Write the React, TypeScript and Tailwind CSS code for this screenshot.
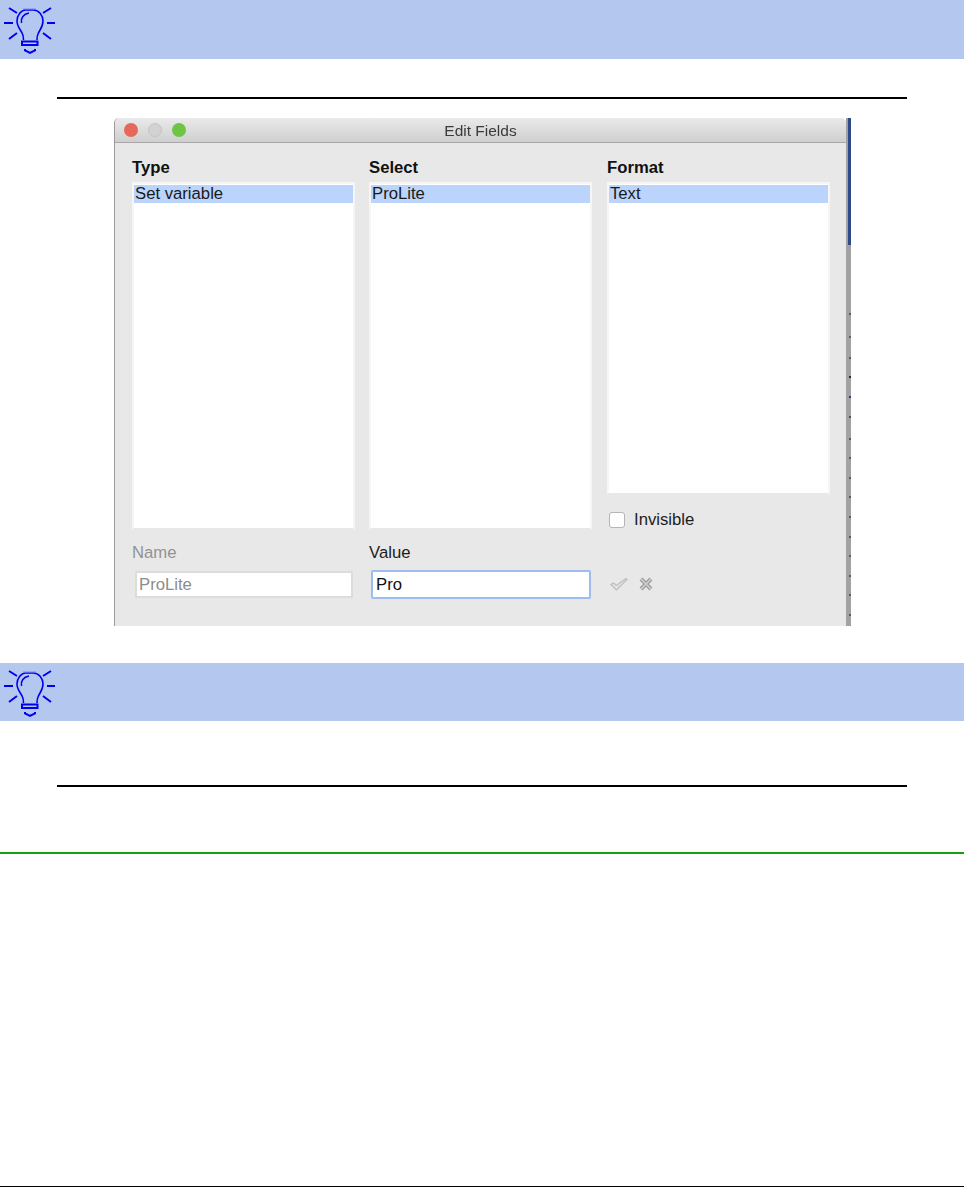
import React from "react";

function Bulb() {
  return (
    <svg width="58" height="58" viewBox="0 0 58 58" fill="none" stroke="#0000f0" strokeWidth="1.6" className="block">
      <path d="M4 23h9M47 23h8M9 8l8 5M51 8l-8 5M9 39l8-6M51 39l-8-6" strokeWidth="2" />
      <path d="M23.500 40c0-2 0-4-1-6-1.500-4-5.500-7-5.500-13 0-6 4.500-11 8.500-11h8c5 0 9.500 5 9.500 11 0 6-3.500 9-5 13-1 2-1 4-1 6" />
      <path d="M21.500 23c-1-5 2-9 7.500-10" />
      <path d="M23 9h13" stroke="#7b86f2" strokeWidth="1" />
      <rect x="22" y="41.500" width="15.500" height="3.500" strokeWidth="2" />
      <path d="M25 49v1.500l5 2.500 5-2.500V49" strokeWidth="2" />
    </svg>
  );
}

function TipBand({ height }: { height: string }) {
  return (
    <div className={`${height} bg-[#b4c7ef]`}>
      <Bulb />
    </div>
  );
}

function Rule() {
  return <div className="mx-[57px] h-[2px] bg-black" />;
}

function ListBox({ item, height }: { item: string; height: string }) {
  return (
    <div className={`${height} border-x-2 border-t-2 border-b-2 border-x-[#f6f6f6] border-t-[#f6f6f6] border-b-[#e8e8e8] bg-white pt-[1px]`}>
      <div className="h-[18px] bg-[#bbd4fb] pl-[1px] text-[16.7px] leading-[18px] text-[#1a1a1a]">{item}</div>
    </div>
  );
}

function Label({ children, bold, muted }: { children: string; bold?: boolean; muted?: boolean }) {
  return (
    <div
      className={`h-[20px] text-[16.7px] leading-[20px] ${bold ? "font-bold text-[#111111]" : ""} ${
        muted ? "text-[#939393]" : "text-[#1c1c1c]"
      }`}
    >
      {children}
    </div>
  );
}

function Strip() {
  const ticks = [
    { y: 313, c: "#55606a" },
    { y: 336, c: "#5a6470" },
    { y: 357, c: "#55606a" },
    { y: 376, c: "#4a2030" },
    { y: 396, c: "#2a3f7a" },
    { y: 416, c: "#6a4a30" },
    { y: 438, c: "#55606a" },
    { y: 457, c: "#55606a" },
    { y: 477, c: "#55606a" },
    { y: 496, c: "#55606a" },
    { y: 516, c: "#55606a" },
    { y: 536, c: "#55606a" },
    { y: 555, c: "#55606a" },
    { y: 575, c: "#55606a" },
    { y: 594, c: "#55606a" },
    { y: 614, c: "#55606a" },
  ];
  return (
    <div className="relative w-[5px] bg-[#a2a2a2] blur-[0.3px]">
      <div className="ml-[2px] h-[127px] bg-[#2f4a86]" />
      {ticks.map((t) => (
        <div
          key={t.y}
          className="absolute right-0 h-[2px] w-[2px]"
          style={{ top: t.y - 118, backgroundColor: t.c }}
        />
      ))}
    </div>
  );
}

export default function App() {
  return (
    <div
      className="flex h-[1187px] w-[964px] flex-col overflow-hidden bg-white"
      style={{ fontFamily: '"Liberation Sans", Arial, sans-serif' }}
    >
      <TipBand height="h-[59px]" />
      <div className="mt-[38px]">
        <Rule />
      </div>
      <div className="ml-[114px] mt-[19px] flex h-[508px] w-[737px]">
        <div className="flex w-[732px] flex-col rounded-t-[5px] border-l-[1px] border-[#9a9a9a] bg-[#e8e8e8] blur-[0.4px]">
          <div className="relative flex h-[25px] items-center rounded-t-[5px] border-b border-[#a8a8a8] bg-gradient-to-b from-[#ebeaea] to-[#d0cfcf] pl-[9px]">
            <div className="flex gap-[10px]">
              <div className="h-[14px] w-[14px] rounded-full bg-[#e6685a]" />
              <div className="h-[14px] w-[14px] rounded-full border border-[#c4c4c4] bg-[#d2d2d2]" />
              <div className="h-[14px] w-[14px] rounded-full bg-[#6cc644]" />
            </div>
            <div className="absolute inset-x-0 top-[4px] text-center text-[15.5px] leading-[18px] text-[#3a3a3a]">
              Edit Fields
            </div>
          </div>
          <div className="flex gap-[14px] pl-[17px] pt-[15px]">
            <div className="w-[223px]">
              <div className="mb-[4px]">
                <Label bold>Type</Label>
              </div>
              <ListBox item="Set variable" height="h-[348px]" />
              <div className="mt-[13px]">
                <Label muted>Name</Label>
              </div>
              <div className="ml-[3px] mr-[2px] mt-[8px] flex h-[27px] items-center border-2 border-[#dcdcdc] bg-white pl-[2px] text-[16.7px] text-[#8c8c8c]">
                ProLite
              </div>
            </div>
            <div className="w-[223px]">
              <div className="mb-[4px]">
                <Label bold>Select</Label>
              </div>
              <ListBox item="ProLite" height="h-[348px]" />
              <div className="mt-[13px]">
                <Label>Value</Label>
              </div>
              <div className="ml-[2px] mr-[1px] mt-[7px] flex h-[29px] items-center rounded-[2px] border-[2px] border-[#9dbcf0] bg-white pl-[3px] text-[16.7px] text-[#111111]">
                Pro
              </div>
            </div>
            <div className="ml-[1px] w-[223px]">
              <div className="mb-[4px]">
                <Label bold>Format</Label>
              </div>
              <ListBox item="Text" height="h-[313px]" />
              <div className="mt-[16px] flex items-center gap-[9px] pl-[2px]">
                <div className="h-[16px] w-[16px] rounded-[3px] border border-[#b5b5b5] bg-white" />
                <div className="text-[16.7px] leading-[18px] text-[#1c1c1c]">Invisible</div>
              </div>
              <div className="ml-[3px] mt-[48px] flex items-center gap-[11px]">
                <svg width="18" height="14" viewBox="0 0 18 14" fill="none" stroke="#bdbdbd" strokeWidth="1.2">
                  <path d="M1 7.500l2.500-1.500 3 2.500L16 1.500l1 1L6.500 13z" fill="#e4e4e4" />
                </svg>
                <svg width="14" height="14" viewBox="0 0 14 14" fill="none">
                  <path d="M2 2l10 10M12 2L2 12" stroke="#9c9c9c" strokeWidth="4" />
                  <path d="M2 2l10 10M12 2L2 12" stroke="#cfcfcf" strokeWidth="1.600" />
                </svg>
              </div>
            </div>
          </div>
        </div>
        <Strip />
      </div>
      <div className="mt-[37px]">
        <TipBand height="h-[58px]" />
      </div>
      <div className="mt-[64px]">
        <Rule />
      </div>
      <div className="mt-[65px] h-[2px] bg-[#14a012]" />
      <div className="flex-1" />
      <div className="h-[1px] bg-black" />
    </div>
  );
}
